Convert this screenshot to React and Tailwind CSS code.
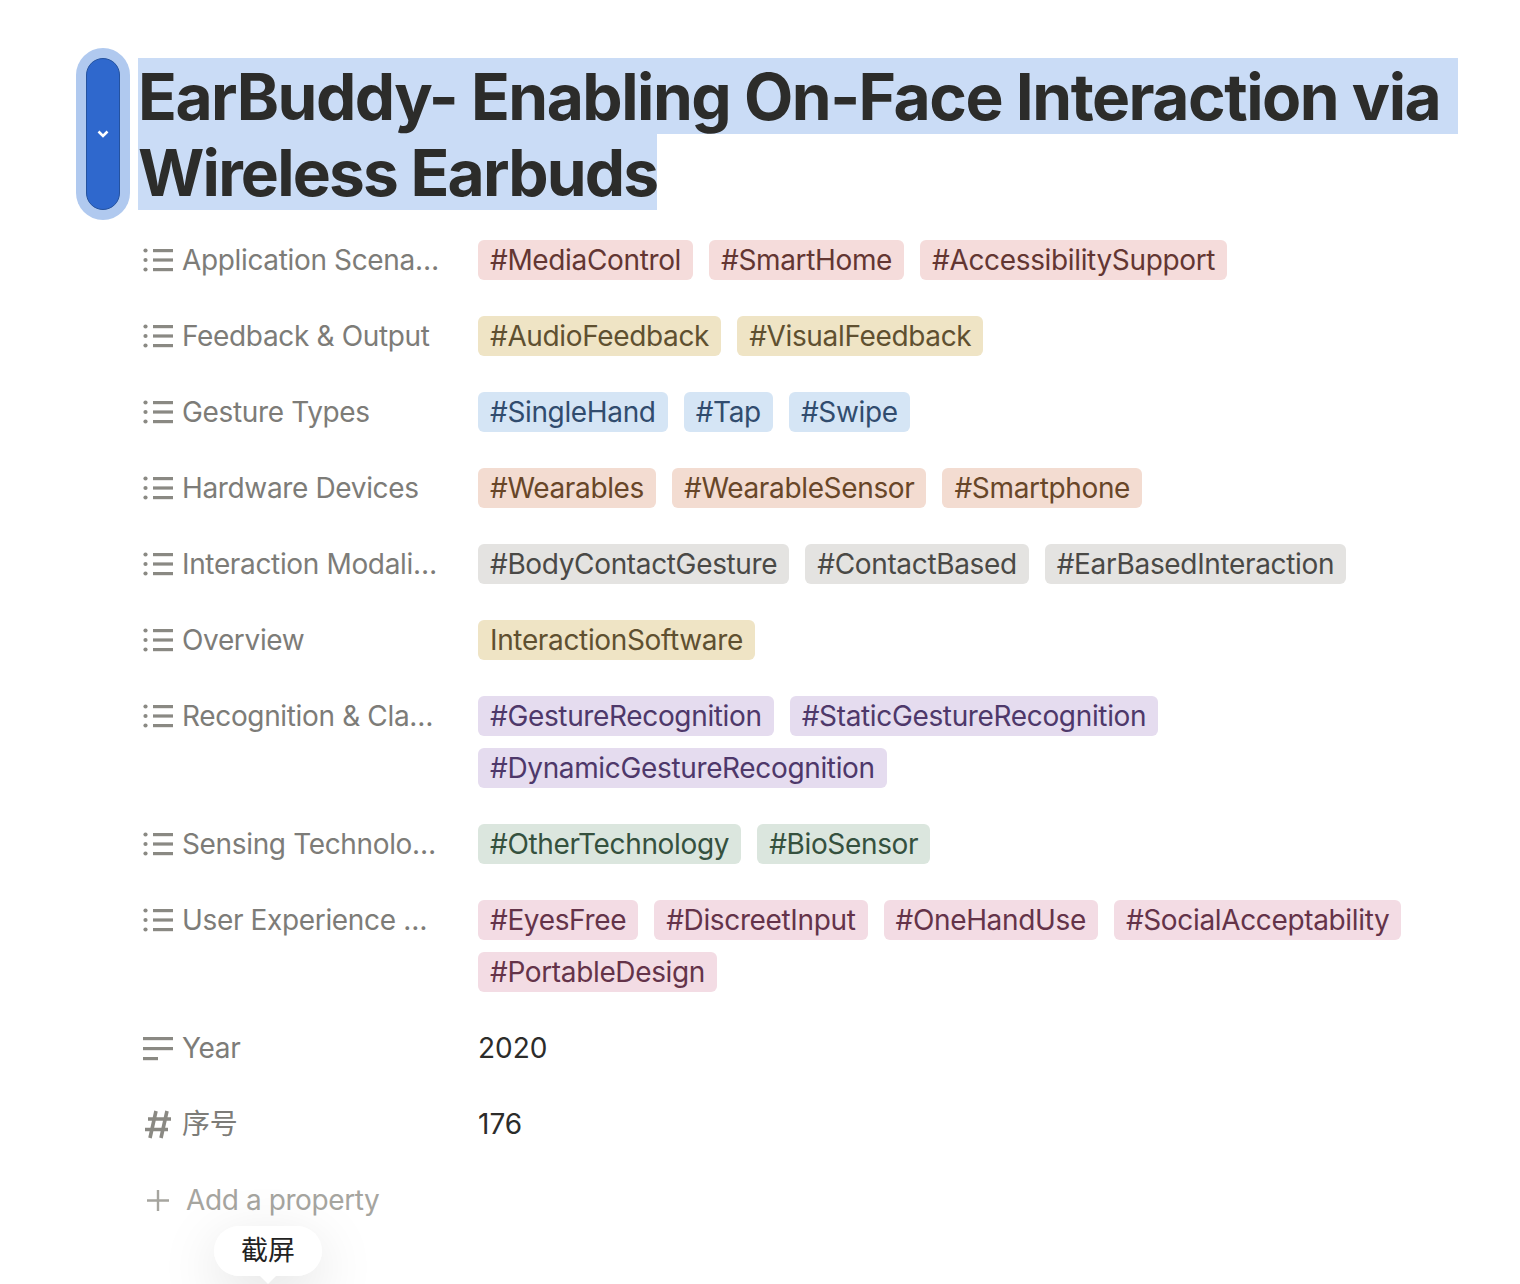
import React from 'react';

const colors = {
  red: 'bg-[#f5dcdb] text-[#633632]',
  yellow: 'bg-[#efe4c5] text-[#5f5030]',
  blue: 'bg-[#d5e5f5] text-[#314c6e]',
  brown: 'bg-[#f3dcd1] text-[#684628]',
  gray: 'bg-[#e4e3e1] text-[#4a4946]',
  purple: 'bg-[#e5dcef] text-[#4e386a]',
  green: 'bg-[#dbe6de] text-[#35513e]',
  pink: 'bg-[#f3dce4] text-[#643349]',
};

const rows = [
  { label: 'Application Scena…', color: 'red', tags: ['#MediaControl', '#SmartHome', '#AccessibilitySupport'] },
  { label: 'Feedback & Output', color: 'yellow', tags: ['#AudioFeedback', '#VisualFeedback'] },
  { label: 'Gesture Types', color: 'blue', tags: ['#SingleHand', '#Tap', '#Swipe'] },
  { label: 'Hardware Devices', color: 'brown', tags: ['#Wearables', '#WearableSensor', '#Smartphone'] },
  { label: 'Interaction Modali…', color: 'gray', tags: ['#BodyContactGesture', '#ContactBased', '#EarBasedInteraction'] },
  { label: 'Overview', color: 'yellow', tags: ['InteractionSoftware'] },
  { label: 'Recognition & Cla…', color: 'purple', tags: ['#GestureRecognition', '#StaticGestureRecognition', '#DynamicGestureRecognition'] },
  { label: 'Sensing Technolo…', color: 'green', tags: ['#OtherTechnology', '#BioSensor'] },
  { label: 'User Experience …', color: 'pink', tags: ['#EyesFree', '#DiscreetInput', '#OneHandUse', '#SocialAcceptability', '#PortableDesign'] },
];

function ListIcon() {
  return (
    <svg width="30" height="26" viewBox="0 0 30 26" className="shrink-0" fill="#8a8983">
      <circle cx="2.5" cy="3.5" r="2.1" />
      <circle cx="2.5" cy="13" r="2.1" />
      <circle cx="2.5" cy="22.5" r="2.1" />
      <rect x="10" y="2" width="20" height="3.2" />
      <rect x="10" y="11.4" width="20" height="3.2" />
      <rect x="10" y="21" width="20" height="3.2" />
    </svg>
  );
}

function TextIcon() {
  return (
    <svg width="30" height="26" viewBox="0 0 30 26" className="shrink-0" fill="#8a8983">
      <rect x="0" y="2" width="30" height="3.2" />
      <rect x="0" y="12" width="30" height="3.2" />
      <rect x="0" y="22" width="15" height="3.2" />
    </svg>
  );
}

function HashIcon() {
  return (
    <svg width="30" height="30" viewBox="0 0 30 30" className="shrink-0" fill="none" stroke="#8a8983" strokeWidth="3.6">
      <path d="M13 2 L7 29 M24 2 L18 29 M5 10 H28 M2 20.5 H25" />
    </svg>
  );
}

function Row({ icon, label, children }) {
  return (
    <div className="flex items-start">
      <div className="flex h-10 w-[335px] shrink-0 items-center tracking-[-0.35px] text-[#7d7c78]">
        <span className="flex w-[39px] shrink-0 items-center">{icon}</span>
        <span>{label}</span>
      </div>
      <div className="flex min-h-10 flex-1 flex-wrap items-center gap-x-4 gap-y-3">{children}</div>
    </div>
  );
}

export default function App() {
  return (
    <div className="relative h-[1284px] w-[1520px] overflow-hidden bg-white font-['Inter','Noto_Sans_CJK_SC',sans-serif] text-[28px] leading-10">
      <div className="absolute left-[76px] top-[48px] flex h-[172px] w-[54px] items-center justify-center rounded-full bg-[#b0c9ef]">
        <div className="flex h-[152px] w-[34px] items-center justify-center rounded-full border border-[#24529f] bg-[#2f68cd]">
          <svg width="12" height="9" viewBox="0 0 12 9" fill="none" stroke="white" strokeWidth="2.6">
            <path d="M1.5 1.5 L6 6 L10.5 1.5" />
          </svg>
        </div>
      </div>

      <div className="pl-[138px] pr-[62px] pt-[58px]">
        <h1 className="whitespace-nowrap text-[64px] font-bold leading-[76px] text-[#2c2c2a]">
          <div className="h-[76px] bg-[#cadcf6] pt-px tracking-[-1.48px]">EarBuddy- Enabling On-Face Interaction via</div>
          <div className="h-[76px] w-fit bg-[#cadcf6] pt-px tracking-[-1.8px]">Wireless Earbuds</div>
        </h1>

        <div className="mt-[30px] flex flex-col gap-9 pl-[5px]">
          {rows.map((row) => (
            <Row key={row.label} icon={<ListIcon />} label={row.label}>
              {row.tags.map((tag) => (
                <span key={tag} className={`flex h-10 items-center rounded-md px-3 tracking-[-0.35px] ${colors[row.color]}`}>
                  {tag}
                </span>
              ))}
            </Row>
          ))}
          <Row icon={<TextIcon />} label="Year">
            <span className="text-[#2c2c2a]">2020</span>
          </Row>
          <Row icon={<HashIcon />} label="序号">
            <span className="text-[#2c2c2a]">176</span>
          </Row>
          <div className="flex h-10 items-center tracking-[-0.4px] text-[#a6a59f]">
            <svg width="24" height="24" viewBox="0 0 24 24" className="ml-[3px] mr-4 shrink-0" stroke="#a6a59f" strokeWidth="2.4">
              <path d="M12 2 V23 M1 12.5 H23" />
            </svg>
            <span>Add a property</span>
          </div>
        </div>
      </div>

      {/* screenshot tooltip */}
      <div className="absolute left-[214px] top-[1226px] flex h-[50px] w-[108px] items-center justify-center rounded-[25px] bg-white/90 text-[27px] text-[#222] shadow-[0_16px_60px_rgba(0,0,0,0.13)]">
        截屏
        <div className="absolute bottom-[-8px] left-[44px] h-0 w-0 border-x-[10px] border-t-[10px] border-x-transparent border-t-white" />
      </div>
    </div>
  );
}
